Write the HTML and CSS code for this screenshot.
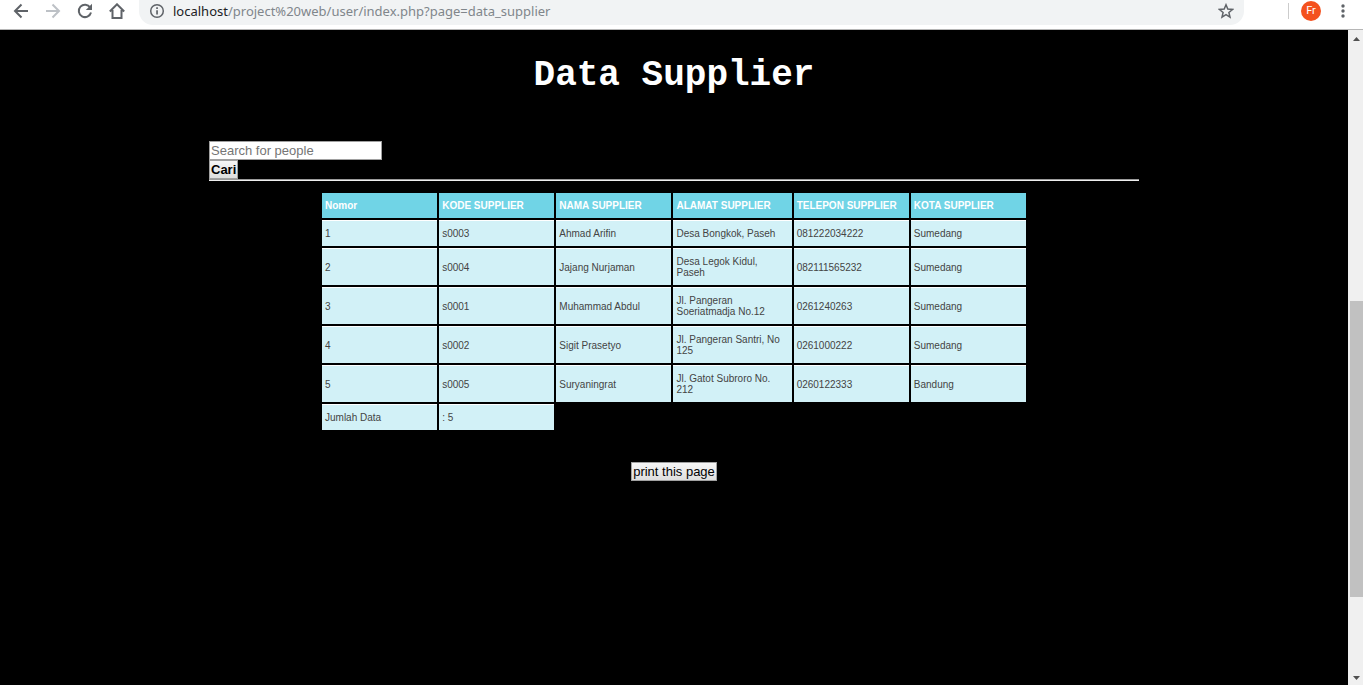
FILE: index.html
```html
<!DOCTYPE html>
<html lang="id">
<head>
<meta charset="utf-8">
<title>Data Supplier</title>
<link rel="stylesheet" href="styles.css">
</head>
<body>
<header class="toolbar">
  <nav class="nav" aria-label="Browser">
    <button class="icon-btn" type="button" aria-label="Back"><svg viewBox="0 0 16 16"><path d="M15 8H2.500M8.500 1.500L2 8l6.500 6.500" fill="none" stroke="#5f6368" stroke-width="2"/></svg></button>
    <button class="icon-btn" type="button" aria-label="Forward"><svg viewBox="0 0 16 16"><path d="M1 8h12.500M7.500 1.500L14 8l-6.500 6.500" fill="none" stroke="#bdc1c6" stroke-width="2"/></svg></button>
    <button class="icon-btn" type="button" aria-label="Reload"><svg viewBox="0 0 16 16"><path d="M13.200 4.500A6.200 6.200 0 1 0 14 9.500" fill="none" stroke="#5f6368" stroke-width="2"/><path d="M15 .8V7H8.800z" fill="#5f6368"/></svg></button>
    <button class="icon-btn" type="button" aria-label="Home"><svg viewBox="0 0 16 16"><path d="M.8 8.500L8 1.300l7.200 7.200M3.500 7v8h9V7" fill="none" stroke="#5f6368" stroke-width="2"/></svg></button>
  </nav>
  <div class="address">
    <svg class="info" viewBox="0 0 16 16"><circle cx="8" cy="8" r="6.300" fill="none" stroke="#5f6368" stroke-width="1.500"/><path d="M7.200 7.200h1.700v4.300H7.200zM7.200 4.300h1.700v1.700H7.200z" fill="#5f6368"/></svg>
    <span class="url"><span class="host">localhost</span>/project%20web/user/index.php?page=data_supplier</span>
    <button class="icon-btn star" type="button" aria-label="Bookmark"><svg viewBox="0 0 16 16"><path d="M8 1.800l1.800 4.300 4.700.4-3.600 3 1.100 4.600L8 11.700l-4 2.400 1.100-4.600-3.600-3 4.700-.4z" fill="none" stroke="#5f6368" stroke-width="1.500"/></svg></button>
  </div>
  <div class="profile">
    <span class="divider"></span>
    <button class="avatar" type="button">Fr</button>
    <button class="icon-btn" type="button" aria-label="Menu"><svg viewBox="0 0 16 16"><g fill="#5f6368"><circle cx="8" cy="3" r="1.700"/><circle cx="8" cy="8" r="1.700"/><circle cx="8" cy="13" r="1.700"/></g></svg></button>
  </div>
</header>
<div class="viewport">
  <main class="page">
    <h1 class="title">Data Supplier</h1>
    <form class="search">
      <input class="field" type="text" placeholder="Search for people" aria-label="Search for people">
      <button class="btn btn-bold" type="submit">Cari</button>
    </form>
    <hr class="rule">
    <table class="suppliers">
      <colgroup><col class="col"><col class="col"><col class="col"><col class="col-wide"><col class="col"><col class="col"></colgroup>
      <thead>
        <tr><th>Nomor</th><th>KODE SUPPLIER</th><th>NAMA SUPPLIER</th><th>ALAMAT SUPPLIER</th><th>TELEPON SUPPLIER</th><th>KOTA SUPPLIER</th></tr>
      </thead>
      <tbody>
        <tr><td>1</td><td>s0003</td><td>Ahmad Arifin</td><td>Desa Bongkok, Paseh</td><td>081222034222</td><td>Sumedang</td></tr>
        <tr><td>2</td><td>s0004</td><td>Jajang Nurjaman</td><td>Desa Legok Kidul, Paseh</td><td>082111565232</td><td>Sumedang</td></tr>
        <tr><td>3</td><td>s0001</td><td>Muhammad Abdul</td><td>Jl. Pangeran Soeriatmadja No.12</td><td>0261240263</td><td>Sumedang</td></tr>
        <tr><td>4</td><td>s0002</td><td>Sigit Prasetyo</td><td>Jl. Pangeran Santri, No 125</td><td>0261000222</td><td>Sumedang</td></tr>
        <tr><td>5</td><td>s0005</td><td>Suryaningrat</td><td>Jl. Gatot Subroro No. 212</td><td>0260122333</td><td>Bandung</td></tr>
        <tr><td>Jumlah Data</td><td>: 5</td></tr>
      </tbody>
    </table>
    <button class="btn print" type="button">print this page</button>
  </main>
  <div class="scrollbar" aria-hidden="true">
    <svg class="arrow" viewBox="0 0 7 4"><path d="M0 4L3.500 0 7 4z" fill="#505050"/></svg>
    <div class="track"><div class="thumb"></div></div>
    <svg class="arrow" viewBox="0 0 7 4"><path d="M0 0L3.500 4 7 0z" fill="#505050"/></svg>
  </div>
</div>
</body>
</html>
```
FILE: styles.css
```css
* { box-sizing: border-box; }

body {
  margin: 0;
  min-height: 100vh;
  display: flex;
  flex-direction: column;
  background: #000;
  font-family: "Liberation Sans", Arial, sans-serif;
}

.toolbar {
  display: flex;
  align-items: flex-start;
  height: 30px;
  background: #fff;
  border-bottom: 1px solid #b6b6b6;
  overflow: hidden;
}

.nav {
  display: flex;
  gap: 16px;
  padding: 3px 14px 0 13px;
}

.icon-btn {
  width: 16px;
  height: 16px;
  padding: 0;
  border: 0;
  background: none;
}

.icon-btn svg, .info { display: block; width: 16px; height: 16px; }

.address {
  flex: 1;
  display: flex;
  align-items: center;
  height: 25px;
  padding: 0 10px 3px;
  background: #f1f3f4;
  border-radius: 0 0 14px 14px;
}

.url {
  flex: 1;
  margin-left: 8px;
  font: 13px/20px "Noto Sans", "Open Sans", sans-serif;
  color: #80868b;
}

.host { color: #202124; }

.profile {
  display: flex;
  align-items: center;
  height: 22px;
  padding: 0 12px 0 44px;
}

.divider {
  width: 1px;
  height: 16px;
  margin-right: 12px;
  background: #ccc;
}

.avatar {
  width: 20px;
  height: 20px;
  margin-right: 14px;
  padding: 0;
  border: 0;
  border-radius: 50%;
  background: #f4511e;
  color: #fff;
  font: 11px/20px Roboto, sans-serif;
}

.viewport { flex: 1; display: flex; }

.page {
  flex: 1;
  display: flex;
  flex-direction: column;
  align-items: center;
  padding: 26px 16px;
}

.title {
  margin: 0;
  color: #fff;
  font: bold 36px/40px "Liberation Mono", "Courier New", monospace;
}

.search, .rule { width: 100%; max-width: 930px; }

.search {
  display: flex;
  flex-direction: column;
  align-items: flex-start;
  margin-top: 45px;
}

.field {
  width: 173px;
  height: 19px;
  padding: 0 1px;
  border: 1px solid #a0a0a0;
  background: #fff;
  font: 13px/17px "Liberation Sans", Arial, sans-serif;
}

.field::placeholder { color: #757575; }

.btn {
  height: 19px;
  padding: 0 1px;
  border: 1px solid #a0a0a0;
  background: linear-gradient(#f6f6f6, #dedede);
  color: #000;
  font: 13px/17px "Liberation Sans", Arial, sans-serif;
}

.btn-bold { font-weight: bold; }

.rule {
  height: 2px;
  margin: 0;
  border: 0;
  border-top: 1px solid #9a9a9a;
  border-bottom: 1px solid #eee;
}

.suppliers {
  width: 708px;
  margin-top: 10px;
  table-layout: fixed;
  border-spacing: 2px;
  font-size: 10px;
  line-height: 11px;
  text-align: left;
}

.col { width: 115px; }
.col-wide { width: 118px; }

.suppliers th {
  padding: 7px 3px;
  background: #70d4e6;
  color: #fff;
  white-space: nowrap;
}

.suppliers td {
  padding: 7px 3px;
  border-top: 1px solid #fff;
  background: #d2f1f7;
  color: #444;
}

.print { margin-top: 30px; }

.scrollbar {
  width: 15px;
  display: flex;
  flex-direction: column;
  align-items: center;
  padding: 7px 0 5px 2px;
  background: #f0f0f0;
}

.arrow { width: 7px; height: 4px; }

.track {
  flex: 1;
  width: 100%;
  padding: 260px 0 79px;
  display: flex;
}

.thumb { flex: 1; background: #c1c1c1; }
```
